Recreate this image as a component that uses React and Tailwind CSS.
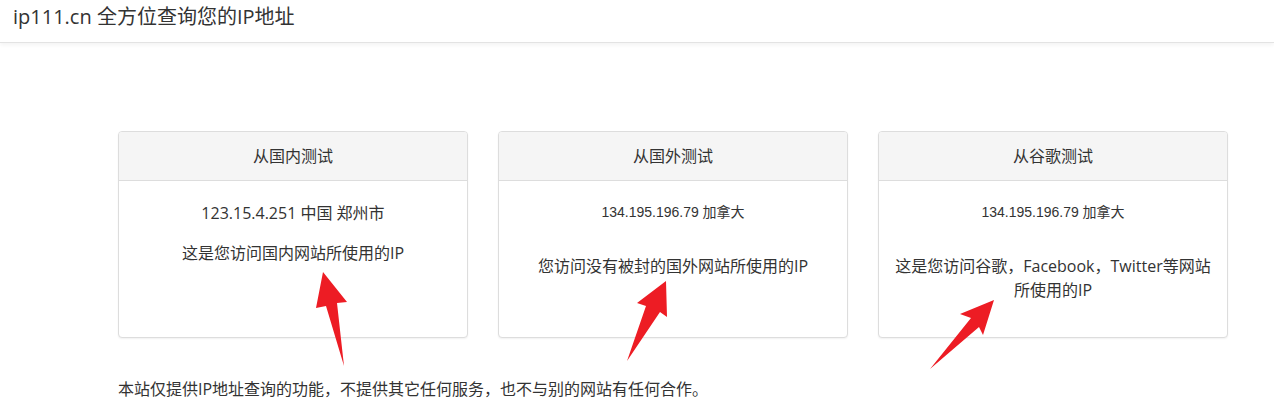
const cn = { fontFamily: '"Segoe UI", "Open Sans", "Noto Sans CJK SC", sans-serif' };
const arial = { fontFamily: '"Liberation Sans", "Noto Sans CJK SC", sans-serif' };

function Card({ title, children }) {
  return (
    <div className="h-[207px] bg-white border border-[#dddddd] rounded-[4px] shadow-[0_1px_2px_rgba(0,0,0,0.06)] overflow-hidden">
      <div className="h-[49px] bg-[#f5f5f5] border-b border-[#dddddd] flex items-center justify-center text-[16px] text-[#333]">
        {title}
      </div>
      <div className="text-center text-[#333]">{children}</div>
    </div>
  );
}

export default function App() {
  return (
    <div className="relative w-[1274px] h-[406px] bg-white overflow-hidden" style={cn}>
      <header className="h-[43px] pl-[13px] pt-[3px] border-b border-[#e3e3e3] shadow-[0_2px_4px_rgba(0,0,0,0.05)] text-[20px] leading-[28px] text-[#333]">
        ip111.cn 全方位查询您的IP地址
      </header>

      <div className="ml-[118px] w-[1110px] mt-[88px] grid grid-cols-3 gap-[30px]">
        <Card title="从国内测试">
          <p className="mt-[21px] text-[16px] leading-[22px]">123.15.4.251 中国 郑州市</p>
          <p className="mt-[18px] text-[16px] leading-[22px]">这是您访问国内网站所使用的IP</p>
        </Card>
        <Card title="从国外测试">
          <p className="mt-[22px] text-[14px] leading-[18px]" style={arial}>134.195.196.79 加拿大</p>
          <p className="mt-[34px] text-[16px] leading-[22px]">您访问没有被封的国外网站所使用的IP</p>
        </Card>
        <Card title="从谷歌测试">
          <p className="mt-[22px] text-[14px] leading-[18px]" style={arial}>134.195.196.79 加拿大</p>
          <p className="mt-[33px] px-[4px] text-[16px] leading-[24px]">这是您访问谷歌，Facebook，Twitter等网站<br />所使用的IP</p>
        </Card>
      </div>

      <p className="ml-[118px] mt-[40px] text-[16px] leading-[22px] text-[#333]">
        本站仅提供IP地址查询的功能，不提供其它任何服务，也不与别的网站有任何合作。
      </p>

      <svg className="absolute inset-0 pointer-events-none" width="1274" height="406" viewBox="0 0 1274 406">
        <polygon fill="#ed1c24" points="344,366 326,306 316,308 323,272 347,302 337,303" />
        <polygon fill="#ed1c24" points="627,361 646,306 637,303 666,281 667,317 660,312" />
        <polygon fill="#ed1c24" points="930,369 971,318 960,314 994,300 983,335 979,327" />
      </svg>
    </div>
  );
}
